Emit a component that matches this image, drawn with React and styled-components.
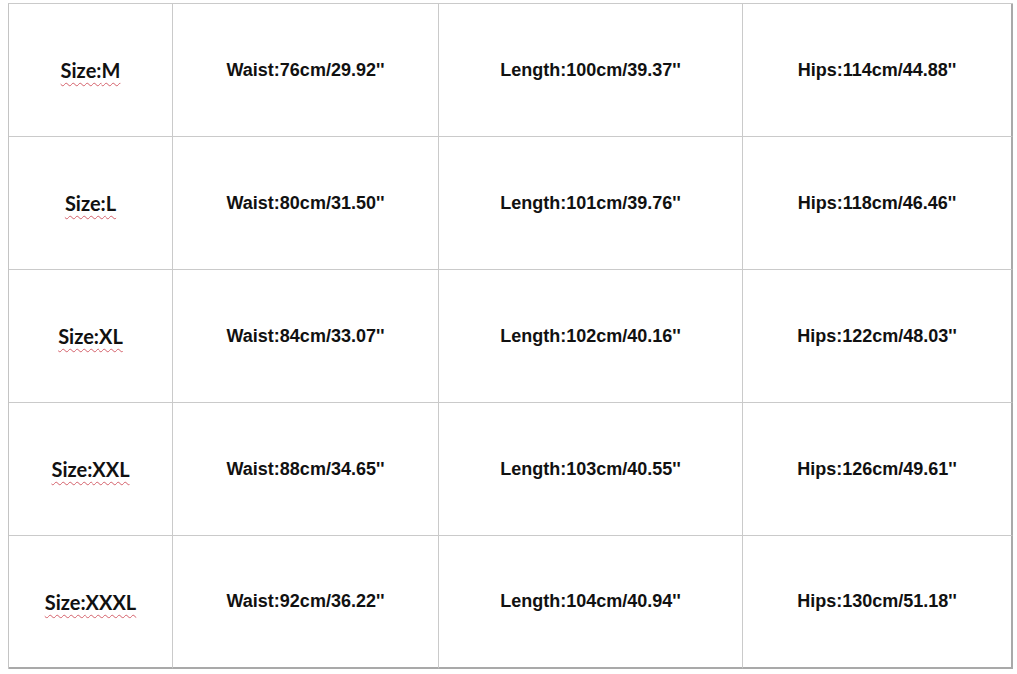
import React from 'react';
import styled, { createGlobalStyle } from 'styled-components';

const GlobalStyle = createGlobalStyle`
  html, body {
    margin: 0;
    background: #ffffff;
  }
  body {
    padding: 3px 0 0 8px;
    font-family: "Liberation Sans", Arial, sans-serif;
  }
`;

const Table = styled.div`
  display: grid;
  grid-template-columns: 164px 266px 304px 270px;
  grid-auto-rows: 133px;
  width: max-content;
  border-top: 1px solid #cacaca;
  border-left: 1px solid #c4c4c4;
`;

const Cell = styled.div`
  box-sizing: border-box;
  display: flex;
  align-items: center;
  justify-content: center;
  border-right: ${(p) => (p.$lastCol ? '2px solid #a9a9a9' : '1px solid #cacaca')};
  border-bottom: ${(p) => (p.$lastRow ? '2px solid #a9a9a9' : '1px solid #cacaca')};
  color: #111;
`;

const SizeLabel = styled.span`
  font-family: Lato, "Open Sans", sans-serif;
  font-weight: 700;
  font-size: 20px;
  text-decoration: underline wavy #d4606a;
  text-decoration-thickness: 1px;
  text-underline-offset: 4px;
`;

const Value = styled.span`
  font-family: "Liberation Sans", Arial, sans-serif;
  font-weight: 700;
  font-size: 18px;
`;

const rows = [
  ['M', '76cm/29.92', '100cm/39.37', '114cm/44.88'],
  ['L', '80cm/31.50', '101cm/39.76', '118cm/46.46'],
  ['XL', '84cm/33.07', '102cm/40.16', '122cm/48.03'],
  ['XXL', '88cm/34.65', '103cm/40.55', '126cm/49.61'],
  ['XXXL', '92cm/36.22', '104cm/40.94', '130cm/51.18'],
];

export default function App() {
  return (
    <>
      <GlobalStyle />
      <Table>
        {rows.map(([size, waist, length, hips], i) => {
          const last = i === rows.length - 1;
          return (
            <React.Fragment key={size}>
              <Cell $lastRow={last}>
                <SizeLabel>Size:{size}</SizeLabel>
              </Cell>
              <Cell $lastRow={last}>
                <Value>Waist:{waist}''</Value>
              </Cell>
              <Cell $lastRow={last}>
                <Value>Length:{length}''</Value>
              </Cell>
              <Cell $lastRow={last} $lastCol>
                <Value>Hips:{hips}''</Value>
              </Cell>
            </React.Fragment>
          );
        })}
      </Table>
    </>
  );
}
